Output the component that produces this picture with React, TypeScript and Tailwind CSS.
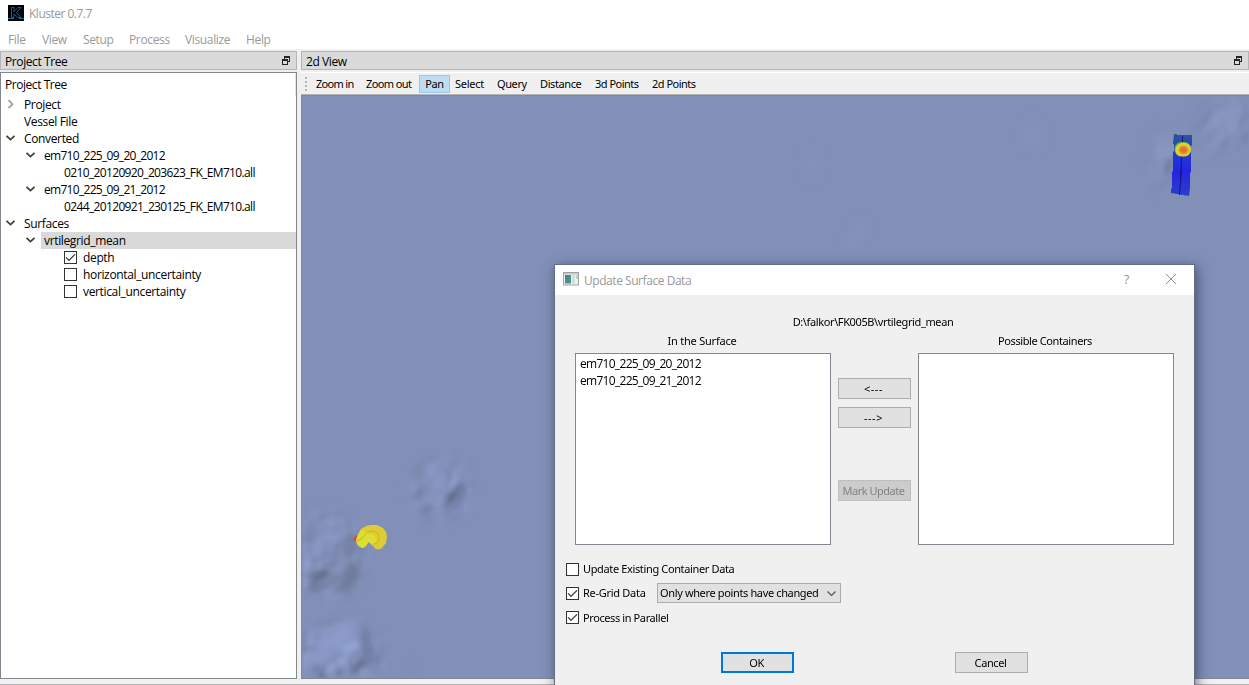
import type { ReactNode } from "react";

const ui = "font-['Open_Sans','Noto_Sans',sans-serif] text-[12px]";
const dlg = "font-['Noto_Sans','Open_Sans',sans-serif] text-[11px] tracking-[-0.4px]";

function Chevron({ open }: { open: boolean }) {
  return (
    <svg width="11" height="11" viewBox="0 0 11 11" fill="none" className="shrink-0">
      {open ? (
        <path d="M1.5 2.8 L5.500 6.600 L9.500 2.8" stroke="#404040" strokeWidth="1.8" />
      ) : (
        <path d="M3.500 1.200 L7.500 5.200 L3.500 9.200" stroke="#a0a0a0" strokeWidth="1.8" />
      )}
    </svg>
  );
}

function CheckBox({ checked }: { checked: boolean }) {
  return (
    <span className="flex size-[13px] shrink-0 items-center justify-center border border-[#333333] bg-white">
      {checked && (
        <svg width="11" height="11" viewBox="0 0 11 11" fill="none">
          <path d="M1 5.3 L4 8.3 L10 2.3" stroke="#333333" strokeWidth="1.2" />
        </svg>
      )}
    </span>
  );
}

function FloatIcon() {
  return (
    <svg width="8" height="9" viewBox="0 0 8 9" fill="none" shapeRendering="crispEdges">
      <path d="M2 0h6v2h-6z M7 2h1v4h-1z M2 2h1v1h-1z M6 5h2v1h-2z" fill="#262626" />
      <path d="M0 3h6v2h-6z M0 5h1v4h-1z M5 5h1v4h-1z M1 8h4v1h-4z" fill="#262626" />
    </svg>
  );
}

function DockTitle({ children }: { children: ReactNode }) {
  return (
    <div className={`flex h-[19px] shrink-0 items-center justify-between border border-[#b4b4b4] bg-[#dadada] pr-[6px] pl-1 tracking-[-0.4px] text-black ${ui}`}>
      <span className="pt-[2px]">{children}</span>
      <FloatIcon />
    </div>
  );
}

function Row({ indent, open, check, label, selected, fit }: {
  indent: string;
  open?: boolean;
  check?: boolean;
  label: string;
  selected?: boolean;
  fit?: string;
}) {
  return (
    <div className={`flex h-[17px] items-center ${indent}`}>
      <span className="flex w-4 shrink-0">{open !== undefined && <Chevron open={open} />}</span>
      {check !== undefined && (
        <span className="mr-[3px] ml-[3px] flex">
          <CheckBox checked={check} />
        </span>
      )}
      <span className={`flex h-[17px] flex-1 items-center pt-px pl-[3px] whitespace-nowrap ${selected ? "bg-[#d9d9d9]" : ""} ${fit ?? "tracking-[-0.35px]"}`}>
        {label}
      </span>
    </div>
  );
}

function Button({ children, look }: { children: ReactNode; look?: string }) {
  return (
    <button className={`flex h-[21px] w-[73px] items-center justify-center pr-[2px] pt-px ${look ?? "border border-[#adadad] bg-[#e1e1e1]"}`}>
      {children}
    </button>
  );
}

function SeaMap() {
  return (
    <svg width="947" height="582" viewBox="302 96 947 582" className="block">
      <defs>
        <filter id="b2" x="-50%" y="-50%" width="200%" height="200%"><feGaussianBlur stdDeviation="2.8" /></filter>
        <filter id="b5" x="-50%" y="-50%" width="200%" height="200%"><feGaussianBlur stdDeviation="6" /></filter>
        <filter id="b9" x="-50%" y="-50%" width="200%" height="200%"><feGaussianBlur stdDeviation="10" /></filter>
        <filter id="relief" x="0" y="0" width="100%" height="100%" colorInterpolationFilters="sRGB">
          <feTurbulence type="fractalNoise" baseFrequency="0.04" numOctaves="2" seed="8" />
          <feColorMatrix values="0 0 0 0 0  0 0 0 0 0  0 0 0 0 0  1 0 0 0 0" />
          <feDiffuseLighting surfaceScale="6" lightingColor="#b5c8ff">
            <feDistantLight azimuth="215" elevation="46" />
          </feDiffuseLighting>
          <feGaussianBlur stdDeviation="1.5" />
        </filter>
        <mask id="hills" maskUnits="userSpaceOnUse" x="302" y="96" width="947" height="582">
          <g filter="url(#b9)" fill="#ffffff">
            <ellipse cx="442" cy="490" rx="26" ry="24" opacity="0.45" />
            <ellipse cx="328" cy="556" rx="30" ry="38" opacity="0.5" />
            <ellipse cx="338" cy="656" rx="40" ry="26" opacity="0.5" />
            <ellipse cx="1165" cy="160" rx="12" ry="26" opacity="0.3" />
            <ellipse cx="1226" cy="125" rx="28" ry="26" opacity="0.22" />
          </g>
        </mask>
        <radialGradient id="peak" cx="0.55" cy="0.55" r="0.52">
          <stop offset="0" stopColor="#e06a35" />
          <stop offset="0.4" stopColor="#e3802f" />
          <stop offset="0.62" stopColor="#e5c42c" />
          <stop offset="0.88" stopColor="#d5da31" />
          <stop offset="1" stopColor="#6fae40" />
        </radialGradient>
        <linearGradient id="track" x1="0" y1="0" x2="0" y2="1">
          <stop offset="0" stopColor="#2a5797" />
          <stop offset="0.25" stopColor="#2340c4" />
          <stop offset="0.6" stopColor="#2424e4" />
          <stop offset="1" stopColor="#2a3fc6" />
        </linearGradient>
      </defs>
      <rect x="302" y="96" width="947" height="582" fill="#8290b9" />
      <rect x="302" y="96" width="947" height="582" filter="url(#relief)" mask="url(#hills)" />
      <g filter="url(#b5)">
        <ellipse cx="434" cy="486" rx="14" ry="16" fill="#8796c2" opacity="0.7" />
        <ellipse cx="322" cy="540" rx="18" ry="20" fill="#8795c3" opacity="0.7" />
        <ellipse cx="345" cy="575" rx="13" ry="18" fill="#75819f" opacity="0.7" />
        <ellipse cx="335" cy="640" rx="24" ry="12" fill="#8c9bcb" transform="rotate(-35 335 640)" />
        <ellipse cx="318" cy="660" rx="14" ry="8" fill="#8a99c8" />
        <ellipse cx="1160" cy="150" rx="8" ry="16" fill="#8997bd" transform="rotate(20 1160 150)" />
        <ellipse cx="1225" cy="120" rx="26" ry="12" fill="#8795bc" opacity="0.7" transform="rotate(-35 1225 120)" />
        <ellipse cx="812" cy="165" rx="8" ry="12" fill="#8694bd" opacity="0.5" />
        <ellipse cx="856" cy="236" rx="4" ry="16" fill="#8896bc" opacity="0.6" transform="rotate(25 856 236)" />
        <ellipse cx="1033" cy="135" rx="7" ry="14" fill="#8694bc" opacity="0.6" />
      </g>
      <g filter="url(#b2)" opacity="0.85">
        <ellipse cx="418" cy="474" rx="6" ry="8" fill="#7b89ad" />
        <path d="M461 482 L467 492 L459 508 L444 515 L455 503 Z" fill="#707da5" />
        <ellipse cx="349" cy="546" rx="7" ry="13" fill="#7581a4" transform="rotate(10 349 546)" />
        <ellipse cx="309" cy="535" rx="4" ry="7" fill="#7885aa" />
        <ellipse cx="327" cy="566" rx="5" ry="5" fill="#7986ac" />
        <path d="M350 558 L359 575 L348 590 L332 592 L345 580 Z" fill="#717c9d" />
        <ellipse cx="320" cy="587" rx="10" ry="4" fill="#7480a4" transform="rotate(-20 320 587)" />
        <ellipse cx="336" cy="569" rx="8" ry="4" fill="#8795c2" transform="rotate(-30 336 569)" />
        <ellipse cx="366" cy="646" rx="5" ry="19" fill="#727fa7" transform="rotate(-5 366 646)" />
        <ellipse cx="315" cy="669" rx="6" ry="3" fill="#707da7" transform="rotate(-25 315 669)" />
        <ellipse cx="373" cy="669" rx="4" ry="6" fill="#7b89b0" />
        <ellipse cx="412" cy="665" rx="3" ry="10" fill="#7f8db5" />
        <ellipse cx="1168" cy="167" rx="4" ry="9" fill="#707d9c" transform="rotate(15 1168 167)" />
        <ellipse cx="1211" cy="135" rx="12" ry="2" fill="#7d8bb0" transform="rotate(-35 1211 135)" />
      </g>
      <path d="M1174 134 h3 v1 h15 v10 l-1 1 v26 l-1 1 v15 l-1 8 l-6 -1 l-12 -2 v-4 l1 -1 v-16 l1 -1 v-19 l1 -1 v-7 h-1 z" fill="url(#track)" />
      <path d="M1182.500 136 V146 M1181.500 155 L1181 176 L1179.500 195" stroke="#17178f" strokeWidth="1" />
      <rect x="1174.500" y="142" width="16.500" height="14.500" rx="6.500" fill="url(#peak)" />
      <path d="M356 541 l-3 -1 l2.500 -4 l1.500 -1 z" fill="#e8452d" />
      <path d="M356 540 L358 534 L361 529 L366 526 L371 525 L377 525 L383 528 L386 532 L387 537 L386 543 L382 548 L379 549.500 L376 549 L368.500 542 L366 546 L363 548 L360 547 L357 544 Z" fill="#dccd34" />
      <path d="M356 540 L361 530 L367 533 L374 535 L377 541 L372 544 L368.500 542 L366 546 L363 548 L360 547 L357 544 Z" fill="#dcde32" />
      <path d="M356 541 L361 539 L367 532.500 Q373 529.500 377 533 Q381 538 378 542 L373 545" stroke="#efa51e" fill="none" strokeWidth="1" />
    </svg>
  );
}

function Dialog() {
  return (
    <div className={`absolute top-[264px] left-[554px] flex h-[440px] w-[641px] flex-col border border-[#646c86] bg-[#f0f0f0] text-black shadow-[2px_3px_12px_rgba(30,35,60,0.6)] ${dlg}`}>
      <div className="flex h-[30px] shrink-0 items-center bg-white pr-[17px] pl-2 font-['Open_Sans',sans-serif] text-[12px] text-[#999999]">
        <svg width="16" height="14" viewBox="0 0 16 14" className="mb-[2px]">
          <rect x="0.5" y="0.5" width="15" height="12.500" fill="#eef0f0" stroke="#9ea3a6" />
          <rect x="1" y="1" width="14" height="1.500" fill="#c3c8cb" />
          <rect x="2" y="3" width="6" height="8.500" fill="#4c9182" />
          <rect x="2" y="3" width="3" height="4" fill="#547da6" />
          <rect x="9" y="3" width="3" height="8.500" fill="#d9dcdc" />
          <rect x="13" y="3" width="2" height="4" fill="#b9d5bd" />
        </svg>
        <span className="ml-[5px] flex-1 pt-px tracking-[-0.45px]">Update Surface Data</span>
        <span className="mr-[36px] text-[13px]">?</span>
        <svg width="12" height="12" viewBox="0 0 12 12" fill="none" className="mb-[2px]">
          <path d="M1 1 L11 11 M11 1 L1 11" stroke="#8c8c8c" strokeWidth="1" />
        </svg>
      </div>
      <div className="mt-[19px] flex h-4 items-center justify-center pr-[3px] tracking-[-0.38px]">D:\falkor\FK005B\vrtilegrid_mean</div>
      <div className="mt-[3px] flex h-4 items-center">
        <span className="ml-[19px] w-[256px] text-center tracking-[-0.22px]">In the Surface</span>
        <span className="ml-[87px] w-[256px] text-center">Possible Containers</span>
      </div>
      <div className="mt-1 ml-5 flex gap-[7px]">
        <div className="h-[192px] w-[256px] border border-[#828790] bg-white px-1 pt-px font-['Open_Sans',sans-serif] text-[12px] tracking-[-0.7px]">
          <div className="flex h-[17px] items-center pt-px">em710_225_09_20_2012</div>
          <div className="flex h-[17px] items-center pt-px">em710_225_09_21_2012</div>
        </div>
        <div className="flex flex-col pt-[25px]">
          <Button><span className="tracking-[0.5px]">&lt;---</span></Button>
          <div className="mt-2"><Button><span className="tracking-[0.5px]">---&gt;</span></Button></div>
          <div className="mt-[52px]"><Button look="border border-[#bfbfbf] bg-[#cccccc] text-[#838383] tracking-[-0.5px]">Mark Update</Button></div>
        </div>
        <div className="h-[192px] w-[256px] border border-[#828790] bg-white" />
      </div>
      <div className="mt-4 ml-[11px] flex h-[17px] items-center gap-1 tracking-[-0.36px]"><CheckBox checked={false} />Update Existing Container Data</div>
      <div className="mt-[5px] ml-[11px] flex h-5 items-center gap-1">
        <CheckBox checked />
        <span className="w-[70px] tracking-[-0.28px]">Re-Grid Data</span>
        <div className="flex h-5 w-[184px] items-center justify-between border border-[#adadad] bg-[#e1e1e1] pr-[3px] pl-[2px]">
          <span className="pt-px tracking-[-0.36px]">Only where points have changed</span>
          <svg width="11" height="11" viewBox="0 0 11 11" fill="none">
            <path d="M1.500 3.500 L5.500 7.500 L9.500 3.500" stroke="#505050" strokeWidth="1.1" />
          </svg>
        </div>
      </div>
      <div className="mt-[6px] ml-[11px] flex h-[17px] items-center gap-1"><CheckBox checked /><span className="pt-px">Process in Parallel</span></div>
      <div className="mt-[26px] ml-[166px] flex gap-[161px]">
        <Button look="border-2 border-[#0078d7] bg-[#e1e1e1]">OK</Button>
        <Button>Cancel</Button>
      </div>
    </div>
  );
}

export default function App() {
  return (
    <div className="relative flex h-[685px] w-[1249px] flex-col overflow-hidden bg-[#f0f0f0]">
      <div className={`flex h-[28px] shrink-0 items-center gap-[5px] bg-white pb-[2px] pl-2 text-[#999999] ${ui}`}>
        <svg width="16" height="16" viewBox="0 0 16 16" fill="none">
          <rect width="16" height="16" fill="#000000" />
          <path d="M3.500 2.500 H6 V6.500 L10 2.500 H13 L8.500 7.500 L13 12.500 H10 L6 9 V12.500 H3.500 Z" stroke="#1d6a9f" strokeWidth="0.9" />
          <path d="M0 13.500 H6 M11 13.500 H16" stroke="#17659b" />
        </svg>
        <span className="pt-[2px] tracking-[-0.5px]">Kluster 0.7.7</span>
      </div>
      <div className={`flex h-[21px] shrink-0 items-center bg-white pt-[3px] pl-2 tracking-[-0.35px] text-[#999999] ${ui}`}>
        <span className="w-[34px]">File</span>
        <span className="w-[41px]">View</span>
        <span className="w-[46px]">Setup</span>
        <span className="w-[56px]">Process</span>
        <span className="w-[61px]">Visualize</span>
        <span>Help</span>
      </div>
      <div className="mt-[2px] flex h-[628px] shrink-0 gap-1">
        <div className="flex w-[297px] flex-col gap-[2px]">
          <DockTitle>Project Tree</DockTitle>
          <div className={`flex-1 border border-[#828790] bg-white text-black ${ui}`}>
            <div className="flex h-[23px] items-center border-r border-[#e5e5e5] pt-px pl-1 tracking-[-0.45px]">Project Tree</div>
            <Row indent="pl-1" open={false} label="Project" />
            <Row indent="pl-1" label="Vessel File" />
            <Row indent="pl-1" open label="Converted" />
            <Row indent="pl-6" open label="em710_225_09_20_2012" fit="tracking-[-0.7px]" />
            <Row indent="pl-11" label="0210_20120920_203623_FK_EM710.all" fit="tracking-[-0.64px]" />
            <Row indent="pl-6" open label="em710_225_09_21_2012" fit="tracking-[-0.7px]" />
            <Row indent="pl-11" label="0244_20120921_230125_FK_EM710.all" fit="tracking-[-0.64px]" />
            <Row indent="pl-1" open label="Surfaces" />
            <Row indent="pl-6" open label="vrtilegrid_mean" selected />
            <Row indent="pl-11" check label="depth" />
            <Row indent="pl-11" check={false} label="horizontal_uncertainty" />
            <Row indent="pl-11" check={false} label="vertical_uncertainty" />
          </div>
        </div>
        <div className="flex w-[948px] flex-col">
          <DockTitle>2d View</DockTitle>
          <div className={`mt-[2px] flex h-[23px] shrink-0 items-center border-t border-b border-t-white border-b-[#b4b4b4] text-black ${dlg}`}>
            <svg width="15" height="16" viewBox="0 0 15 16" fill="#b8b8b8">
              <path d="M4 1h2v2h-2z M4 5h2v2h-2z M4 9h2v2h-2z M4 13h2v2h-2z" />
            </svg>
            <span className="w-[50px] pt-[2px] tracking-[-0.7px]">Zoom in</span>
            <span className="w-[53px] pt-[2px] tracking-[-0.6px]">Zoom out</span>
            <span className="mr-[5px] flex h-[18px] w-[31px] items-center justify-center border border-[#90c8f6] bg-[#c0dcf3] pt-[2px]">Pan</span>
            <span className="w-[42px] pt-[2px] tracking-[-0.25px]">Select</span>
            <span className="w-[43px] pt-[2px]">Query</span>
            <span className="w-[55px] pt-[2px]">Distance</span>
            <span className="w-[57px] pt-[2px] tracking-[-0.5px]">3d Points</span>
            <span className="pt-[2px] tracking-[-0.5px]">2d Points</span>
          </div>
          <div className="h-[584px] border border-[#828790]">
            <SeaMap />
          </div>
        </div>
      </div>
      <div className="mt-[5px] h-px bg-[#b4b4b4]" />
      <Dialog />
    </div>
  );
}
